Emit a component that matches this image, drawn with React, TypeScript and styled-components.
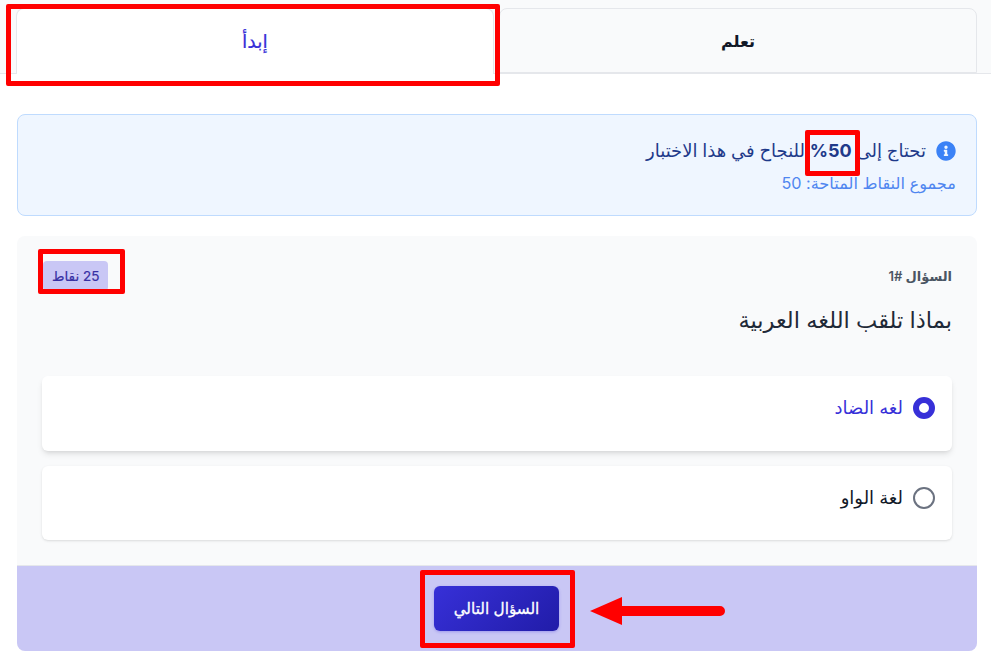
import React from "react";
import styled, { createGlobalStyle } from "styled-components";
import { FaInfoCircle } from "react-icons/fa";

const GlobalStyle = createGlobalStyle`
  html, body {
    margin: 0;
    padding: 0;
    background: #ffffff;
    font-family: Inter, "Noto Sans", "DejaVu Sans", sans-serif;
  }
`;

const Page = styled.div`
  position: relative;
  width: 991px;
  height: 660px;
  overflow: hidden;
  direction: rtl;
  color: #111827;
`;

const TabBar = styled.div`
  display: flex;
  height: 65px;
  padding: 8px 14px 0 16px;
  gap: 5px;
  background: #f9fafb;
  border-top: 1px solid #e5e7eb;
  border-bottom: 1px solid #e5e7eb;
  box-sizing: content-box;
  margin-top: -1px;
`;

const Tab = styled.button<{ $active?: boolean }>`
  flex: 1;
  height: ${(p) => (p.$active ? "66px" : "65px")};
  border: 1px solid #e5e7eb;
  border-bottom: ${(p) => (p.$active ? "none" : "1px solid #e5e7eb")};
  border-radius: 8px 8px 0 0;
  background: ${(p) => (p.$active ? "#ffffff" : "#f9fafb")};
  color: ${(p) => (p.$active ? "#3730d8" : "#111827")};
  font-family: inherit;
  font-size: ${(p) => (p.$active ? "19px" : "16px")};
  font-weight: ${(p) => (p.$active ? 400 : 600)};
  -webkit-text-stroke: ${(p) => (p.$active ? "0.2px" : "0")};
  padding: 0;
`;

const Content = styled.div`
  display: flex;
  flex-direction: column;
  gap: 20px;
  padding: 40px 14px 0 14px;
  margin-left: 3px;
`;

const InfoBox = styled.div`
  height: 102px;
  box-sizing: border-box;
  padding: 22px 20px;
  background: #eff6ff;
  border: 1px solid #bfdbfe;
  border-radius: 8px;
`;

const InfoTitle = styled.div`
  display: flex;
  align-items: center;
  gap: 10px;
  font-size: 18px;
  font-weight: 500;
  line-height: 28px;
  color: #1e3a8a;
`;

const InfoIcon = styled(FaInfoCircle)`
  width: 20px;
  height: 20px;
  color: #3b82f6;
  flex-shrink: 0;
`;

const InfoSub = styled.div`
  margin-top: 8px;
  font-size: 16.2px;
  line-height: 20px;
  color: #4f86f0;
`;

const Strong = styled.strong`
  font-weight: 700;
`;

const QuizCard = styled.div`
  height: 415px;
  display: flex;
  flex-direction: column;
  background: #f9fafb;
  border-radius: 8px;
  overflow: hidden;
`;

const QuizBody = styled.div`
  flex: 1;
  padding: 25px 25px 0 25px;
`;

const QuizHead = styled.div`
  display: flex;
  justify-content: space-between;
  align-items: center;
  height: 30px;
  margin-bottom: 2px;
`;

const QuestionNo = styled.span`
  font-size: 13px;
  font-weight: 600;
  color: #4b5563;
`;

const Points = styled.span`
  margin-left: 1px;
  padding: 0 9px;
  height: 30px;
  line-height: 30px;
  border-radius: 4px;
  background: #c9c7f5;
  color: #3730a3;
  font-size: 13.5px;
  font-weight: 400;
  -webkit-text-stroke: 0.2px;
`;

const QuestionText = styled.h2`
  margin: 15px 0 42px;
  font-size: 22.5px;
  font-weight: 400;
  line-height: 28px;
  color: #1f2937;
`;

const Options = styled.div`
  display: flex;
  flex-direction: column;
  gap: 15px;
`;

const Option = styled.label<{ $checked?: boolean }>`
  display: flex;
  align-items: flex-start;
  gap: 10px;
  height: ${(p) => (p.$checked ? "75px" : "74px")};
  box-sizing: border-box;
  padding: 21px 17px 0;
  background: #ffffff;
  border-radius: 6px;
  box-shadow: ${(p) =>
    p.$checked
      ? "0 4px 6px -1px rgba(0,0,0,0.1), 0 2px 4px -2px rgba(0,0,0,0.1)"
      : "0 1px 3px rgba(0,0,0,0.1), 0 1px 2px -1px rgba(0,0,0,0.1)"};
  font-size: 18px;
  line-height: 22px;
  color: ${(p) => (p.$checked ? "#3730d8" : "#111827")};
`;

const Radio = styled.span<{ $checked?: boolean }>`
  width: 22px;
  height: 22px;
  box-sizing: border-box;
  border-radius: 50%;
  flex-shrink: 0;
  background: #ffffff;
  border: ${(p) => (p.$checked ? "6px solid #3730d8" : "2px solid #6b7280")};
`;

const QuizFooter = styled.div`
  height: 86px;
  display: flex;
  align-items: center;
  justify-content: center;
  background: #c9c7f5;
  border-top: 1px solid #e5e7eb;
  box-sizing: border-box;
`;

const NextButton = styled.button`
  width: 125px;
  height: 45px;
  margin-right: 1px;
  border: none;
  border-radius: 6px;
  background: linear-gradient(135deg, #3730d8, #211ca8);
  box-shadow: 0 1px 3px rgba(55, 48, 216, 0.3);
  color: #ffffff;
  font-family: inherit;
  font-size: 15.3px;
  font-weight: 400;
  -webkit-text-stroke: 0.3px;
  padding: 0;
`;

const Highlight = styled.div<{ $x: number; $y: number; $w: number; $h: number; $t: number }>`
  position: absolute;
  left: ${(p) => p.$x}px;
  top: ${(p) => p.$y}px;
  width: ${(p) => p.$w}px;
  height: ${(p) => p.$h}px;
  box-sizing: border-box;
  border: ${(p) => p.$t}px solid #ff0000;
  border-radius: 2px;
  pointer-events: none;
`;

const ArrowMark = styled.svg`
  position: absolute;
  left: 588px;
  top: 596px;
  width: 140px;
  height: 30px;
`;

export default function App() {
  return (
    <Page>
      <GlobalStyle />
      <TabBar>
        <Tab>تعلم</Tab>
        <Tab $active>إبدأ</Tab>
      </TabBar>
      <Content>
        <InfoBox>
          <InfoTitle>
            <InfoIcon />
            <span>
              تحتاج إلى <Strong>50%</Strong> للنجاح في هذا الاختبار
            </span>
          </InfoTitle>
          <InfoSub>مجموع النقاط المتاحة: 50</InfoSub>
        </InfoBox>
        <QuizCard>
          <QuizBody>
            <QuizHead>
              <QuestionNo>السؤال #1</QuestionNo>
              <Points>25 نقاط</Points>
            </QuizHead>
            <QuestionText>بماذا تلقب اللغه العربية</QuestionText>
            <Options>
              <Option $checked>
                <Radio $checked />
                لغه الضاد
              </Option>
              <Option>
                <Radio />
                لغة الواو
              </Option>
            </Options>
          </QuizBody>
          <QuizFooter>
            <NextButton>السؤال التالي</NextButton>
          </QuizFooter>
        </QuizCard>
      </Content>
      <Highlight $x={6} $y={4} $w={494} $h={82} $t={5} />
      <Highlight $x={805} $y={130} $w={55} $h={46} $t={5} />
      <Highlight $x={38} $y={249} $w={87} $h={45} $t={5} />
      <Highlight $x={420} $y={570} $w={155} $h={78} $t={5} />
      <ArrowMark viewBox="0 0 140 30">
        <path d="M2 15 L34 1 V10 H132 a5 5 0 0 1 0 10 H34 V29 Z" fill="#ff0000" />
      </ArrowMark>
    </Page>
  );
}
